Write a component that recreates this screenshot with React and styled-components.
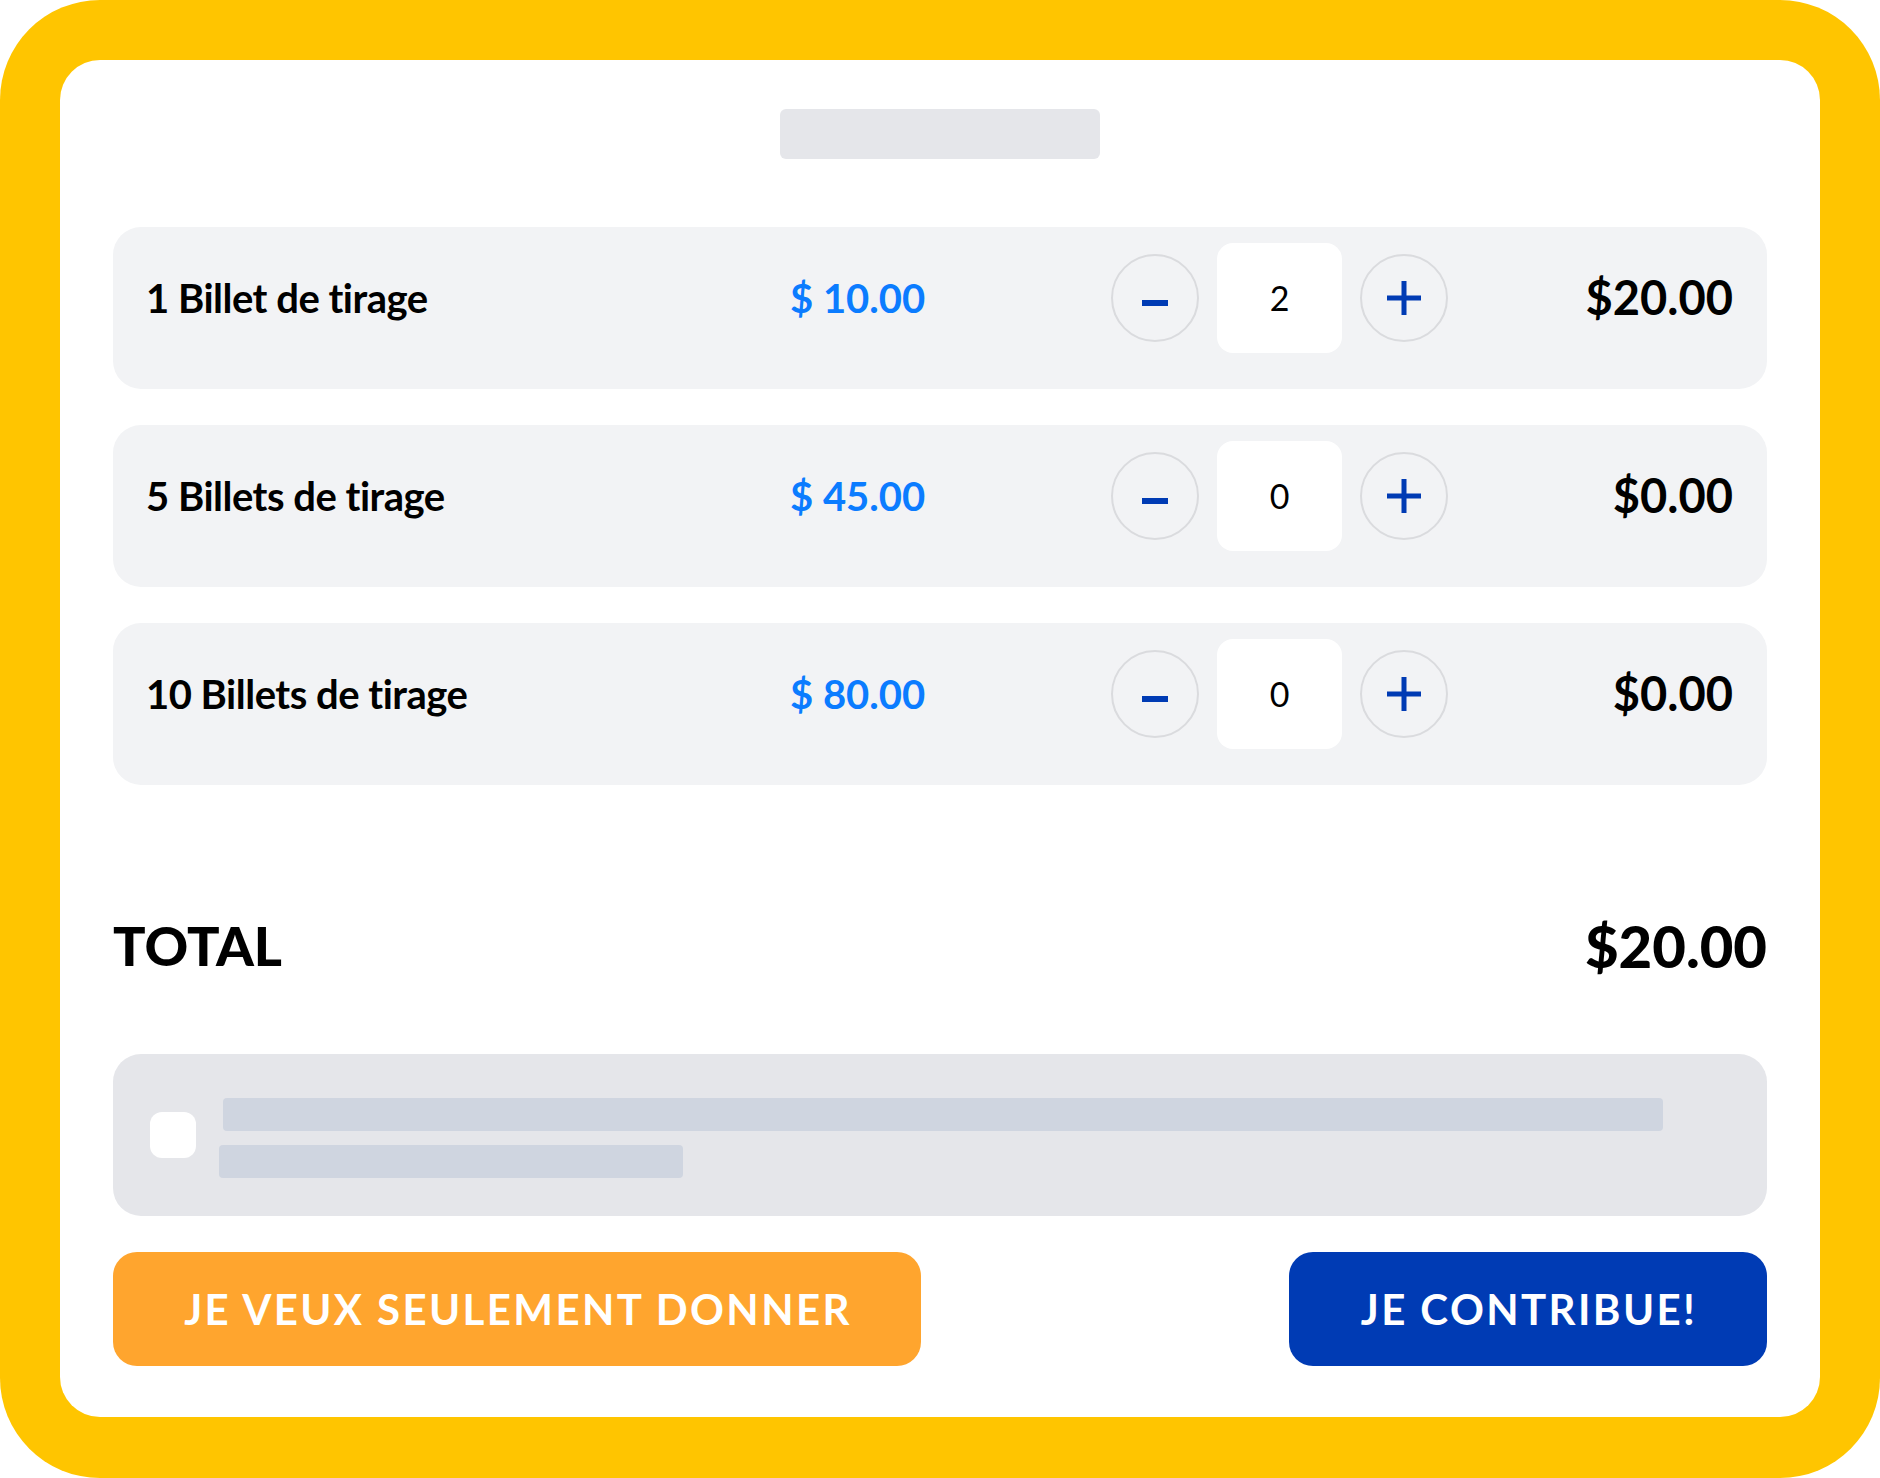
import React from "react";
import styled, { createGlobalStyle } from "styled-components";

const GlobalStyle = createGlobalStyle`
  html, body {
    margin: 0;
    padding: 0;
    background: #ffffff;
  }
  body {
    font-family: Lato, "Liberation Sans", sans-serif;
    color: #000;
  }
  * { box-sizing: border-box; }
`;

const Frame = styled.div`
  width: 1880px;
  height: 1478px;
  padding: 60px 60px 61px 60px;
  background: #ffc500;
  border-radius: 100px;
  display: flex;
`;

const Card = styled.div`
  flex: 1;
  background: #ffffff;
  border-radius: 40px;
  padding: 49px 53px 51px 53px;
  display: flex;
  flex-direction: column;
`;

const TopBar = styled.div`
  align-self: center;
  width: 320px;
  height: 50px;
  border-radius: 6px;
  background: #e5e6ea;
`;

const Rows = styled.div`
  margin-top: 68px;
  display: flex;
  flex-direction: column;
  gap: 36px;
`;

const Row = styled.div`
  height: 162px;
  display: grid;
  grid-template-columns: 644px 321px auto 1fr;
  align-items: center;
  padding: 16px 34px 36px 33px;
  background: #f2f3f5;
  border-radius: 28px;
`;

const Label = styled.div`
  font-size: 40px;
  font-weight: 700;
  letter-spacing: -0.5px;
  line-height: 1;
`;

const Price = styled.div`
  font-size: 40px;
  font-weight: 700;
  line-height: 1;
  color: #0b7cff;
`;

const Stepper = styled.div`
  display: flex;
  align-items: center;
  gap: 18px;
`;

const CircleBtn = styled.button`
  width: 88px;
  height: 88px;
  border-radius: 50%;
  border: 2px solid #dadbde;
  background: transparent;
  padding: 0;
  display: flex;
  align-items: center;
  justify-content: center;
  cursor: pointer;
`;

const QtyBox = styled.div`
  width: 125px;
  height: 110px;
  border-radius: 16px;
  background: #ffffff;
  display: flex;
  align-items: center;
  justify-content: center;
  font-size: 34px;
  font-weight: 400;
  color: #000;
`;

const LineTotal = styled.div`
  justify-self: end;
  font-size: 47px;
  font-weight: 700;
  line-height: 1;
`;

const TotalRow = styled.div`
  margin-top: 133px;
  margin-bottom: 80px;
  height: 56px;
  display: flex;
  align-items: center;
  justify-content: space-between;
`;

const TotalLabel = styled.div`
  font-size: 54px;
  font-weight: 900;
  line-height: 1;
`;

const TotalValue = styled.div`
  font-size: 58px;
  font-weight: 900;
  line-height: 1;
`;

const Consent = styled.div`
  height: 163px;
  background: #e5e6ea;
  border-radius: 28px;
  padding-left: 37px;
  display: flex;
  align-items: center;
  gap: 27px;
`;

const Check = styled.div`
  width: 46px;
  height: 46px;
  border-radius: 12px;
  background: #ffffff;
  flex-shrink: 0;
`;

const Lines = styled.div`
  display: flex;
  flex-direction: column;
  gap: 14px;
  margin-top: 6px;
`;

const Line = styled.div`
  height: 33px;
  width: ${(p) => p.$w}px;
  margin-left: ${(p) => p.$shift || 0}px;
  border-radius: 4px;
  background: #cfd5e0;
`;

const Buttons = styled.div`
  margin-top: 36px;
  display: flex;
  justify-content: space-between;
`;

const ActionBtn = styled.button`
  width: ${(p) => p.$w}px;
  height: 114px;
  border: none;
  border-radius: 24px;
  background: ${(p) => p.$bg};
  color: #ffffff;
  font-family: Lato, "Liberation Sans", sans-serif;
  font-size: 42px;
  font-weight: 700;
  letter-spacing: 2.4px;
  padding: 0 0 0 2px;
  cursor: pointer;
`;

const MinusIcon = () => (
  <svg width="34" height="34" viewBox="0 0 34 34">
    <rect x="4" y="19" width="26" height="6" fill="#003bb4" />
  </svg>
);

const PlusIcon = () => (
  <svg width="36" height="36" viewBox="0 0 36 36">
    <rect x="1" y="15.5" width="34" height="5" fill="#003bb4" />
    <rect x="15.5" y="1" width="5" height="34" fill="#003bb4" />
  </svg>
);

const items = [
  { label: "1 Billet de tirage", price: "$ 10.00", qty: 2, total: "$20.00" },
  { label: "5 Billets de tirage", price: "$ 45.00", qty: 0, total: "$0.00" },
  { label: "10 Billets de tirage", price: "$ 80.00", qty: 0, total: "$0.00" },
];

export default function App() {
  return (
    <>
      <GlobalStyle />
      <Frame>
        <Card>
          <TopBar />
          <Rows>
            {items.map((it) => (
              <Row key={it.label}>
                <Label>{it.label}</Label>
                <Price>{it.price}</Price>
                <Stepper>
                  <CircleBtn aria-label="moins">
                    <MinusIcon />
                  </CircleBtn>
                  <QtyBox>{it.qty}</QtyBox>
                  <CircleBtn aria-label="plus">
                    <PlusIcon />
                  </CircleBtn>
                </Stepper>
                <LineTotal>{it.total}</LineTotal>
              </Row>
            ))}
          </Rows>
          <TotalRow>
            <TotalLabel>TOTAL</TotalLabel>
            <TotalValue>$20.00</TotalValue>
          </TotalRow>
          <Consent>
            <Check />
            <Lines>
              <Line $w={1440} />
              <Line $w={464} $shift={-4} />
            </Lines>
          </Consent>
          <Buttons>
            <ActionBtn $w={808} $bg="#ffa52e">JE VEUX SEULEMENT DONNER</ActionBtn>
            <ActionBtn $w={478} $bg="#003bb4">JE CONTRIBUE!</ActionBtn>
          </Buttons>
        </Card>
      </Frame>
    </>
  );
}
